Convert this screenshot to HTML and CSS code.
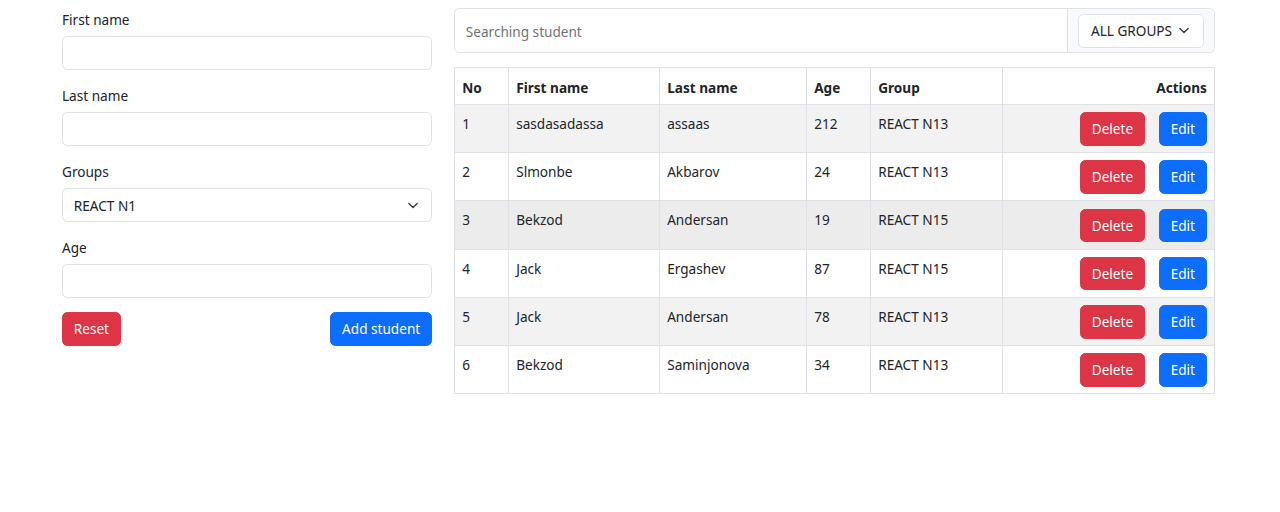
FILE: index.html
```html
<!DOCTYPE html>
<html lang="en">
<head>
<meta charset="utf-8">
<title>Students</title>
<link rel="stylesheet" href="styles.css">
</head>
<body>
<div class="page">
  <form class="side">
    <div class="field">
      <label class="label">First name</label>
      <input class="control" type="text">
    </div>
    <div class="field">
      <label class="label">Last name</label>
      <input class="control" type="text">
    </div>
    <div class="field">
      <label class="label">Groups</label>
      <div class="select control">
        <span>REACT N1</span>
        <svg class="chev" viewBox="0 0 16 16" width="14" height="11"><path d="M2 5l6 6 6-6" fill="none" stroke="#343a40" stroke-width="2" stroke-linecap="round" stroke-linejoin="round"/></svg>
      </div>
    </div>
    <div class="field">
      <label class="label">Age</label>
      <input class="control" type="text">
    </div>
    <div class="actions-row">
      <button type="button" class="btn danger">Reset</button>
      <button type="button" class="btn primary">Add student</button>
    </div>
  </form>

  <main class="main">
    <div class="search">
      <div class="search-input">Searching student</div>
      <div class="search-addon">
        <div class="select small">
          <span>ALL GROUPS</span>
          <svg class="chev" viewBox="0 0 16 16" width="14" height="11"><path d="M2 5l6 6 6-6" fill="none" stroke="#343a40" stroke-width="2" stroke-linecap="round" stroke-linejoin="round"/></svg>
        </div>
      </div>
    </div>

    <table class="table">
      <colgroup>
        <col class="c-no"><col class="c-first"><col class="c-last"><col class="c-age"><col class="c-group"><col class="c-act">
      </colgroup>
      <thead>
        <tr><th>No</th><th>First name</th><th>Last name</th><th>Age</th><th>Group</th><th class="right">Actions</th></tr>
      </thead>
      <tbody>
        <tr class="odd"><td>1</td><td>sasdasadassa</td><td>assaas</td><td>212</td><td>REACT N13</td><td class="right"><button class="btn danger">Delete</button><button class="btn primary edit">Edit</button></td></tr>
        <tr><td>2</td><td>Slmonbe</td><td>Akbarov</td><td>24</td><td>REACT N13</td><td class="right"><button class="btn danger">Delete</button><button class="btn primary edit">Edit</button></td></tr>
        <tr class="hover"><td>3</td><td>Bekzod</td><td>Andersan</td><td>19</td><td>REACT N15</td><td class="right"><button class="btn danger">Delete</button><button class="btn primary edit">Edit</button></td></tr>
        <tr><td>4</td><td>Jack</td><td>Ergashev</td><td>87</td><td>REACT N15</td><td class="right"><button class="btn danger">Delete</button><button class="btn primary edit">Edit</button></td></tr>
        <tr class="odd"><td>5</td><td>Jack</td><td>Andersan</td><td>78</td><td>REACT N13</td><td class="right"><button class="btn danger">Delete</button><button class="btn primary edit">Edit</button></td></tr>
        <tr><td>6</td><td>Bekzod</td><td>Saminjonova</td><td>34</td><td>REACT N13</td><td class="right"><button class="btn danger">Delete</button><button class="btn primary edit">Edit</button></td></tr>
      </tbody>
    </table>
  </main>
</div>
</body>
</html>
```

FILE: styles.css
```css
* { box-sizing: border-box; }
html, body { margin: 0; background: #fff; }
body {
  font-family: "Noto Sans", "Open Sans", sans-serif;
  font-size: 13.6px;
  line-height: 21.6px;
  color: #212529;
}
.page {
  width: 1153px;
  margin-left: 62px;
  padding-top: 8px;
  display: flex;
  gap: 22px;
  align-items: flex-start;
}
.side { width: 370px; flex: none; }
.field { margin-bottom: 14px; }
.label { display: block; height: 21.6px; margin-top: 0; margin-bottom: 6.4px; color: #212529; padding-top: 1px; }
.control {
  display: block;
  width: 100%;
  height: 34px;
  border: 1px solid #dee2e6;
  border-radius: 5.4px;
  background: #fff;
  padding: 0 10.8px;
  font: inherit;
  color: #212529;
  outline: none;
}
.select {
  display: flex;
  align-items: center;
  justify-content: space-between;
  padding-top: 1px;
}
.chev { flex: none; }
.actions-row {
  display: flex;
  justify-content: space-between;
}
.btn {
  font: inherit;
  border: 1px solid transparent;
  border-radius: 5.4px;
  height: 33.6px;
  padding: 0 10.8px;
  color: #fff;
  cursor: pointer;
}
.danger { background: #dc3545; border-color: #dc3545; }
.primary { background: #0d6efd; border-color: #0d6efd; }

.main { flex: 1; min-width: 0; }
.search {
  display: flex;
  height: 45px;
  border: 1px solid #dee2e6;
  border-radius: 5.4px;
  margin-bottom: 14px;
  overflow: hidden;
}
.search-input {
  flex: 1;
  display: flex;
  align-items: center;
  padding: 2px 10.8px 0;
  color: #6c757d;
}
.search-addon {
  width: 147px;
  flex: none;
  background: #f8f9fa;
  border-left: 1px solid #dee2e6;
  display: flex;
  align-items: center;
  padding: 0 10px;
}
.select.small {
  width: 126px;
  height: 34px;
  background: #fff;
  border: 1px solid #dee2e6;
  border-radius: 5.4px;
  padding: 0 12px;
}
.table {
  width: 100%;
  border-collapse: collapse;
  table-layout: fixed;
}
.c-no { width: 54px; }
.c-first { width: 151px; }
.c-last { width: 147px; }
.c-age { width: 64px; }
.c-group { width: 132px; }
.c-act { width: auto; }
.table th, .table td {
  border: 1px solid #dee2e6;
  padding: 7.2px 7.2px;
  text-align: left;
  vertical-align: top;
}
.table th { font-weight: 700; height: 36px; padding-top: 8.5px; padding-bottom: 5.9px; }
.table td { height: 47.8px; padding-top: 8px; padding-bottom: 6.4px; }
.table .right { text-align: right; }
tr.odd td { background: #f2f2f2; }
tr.hover td { background: #ececec; }
.table td .btn { vertical-align: top; margin-top: -0.8px; }
.edit { margin-left: 14px; }
```
